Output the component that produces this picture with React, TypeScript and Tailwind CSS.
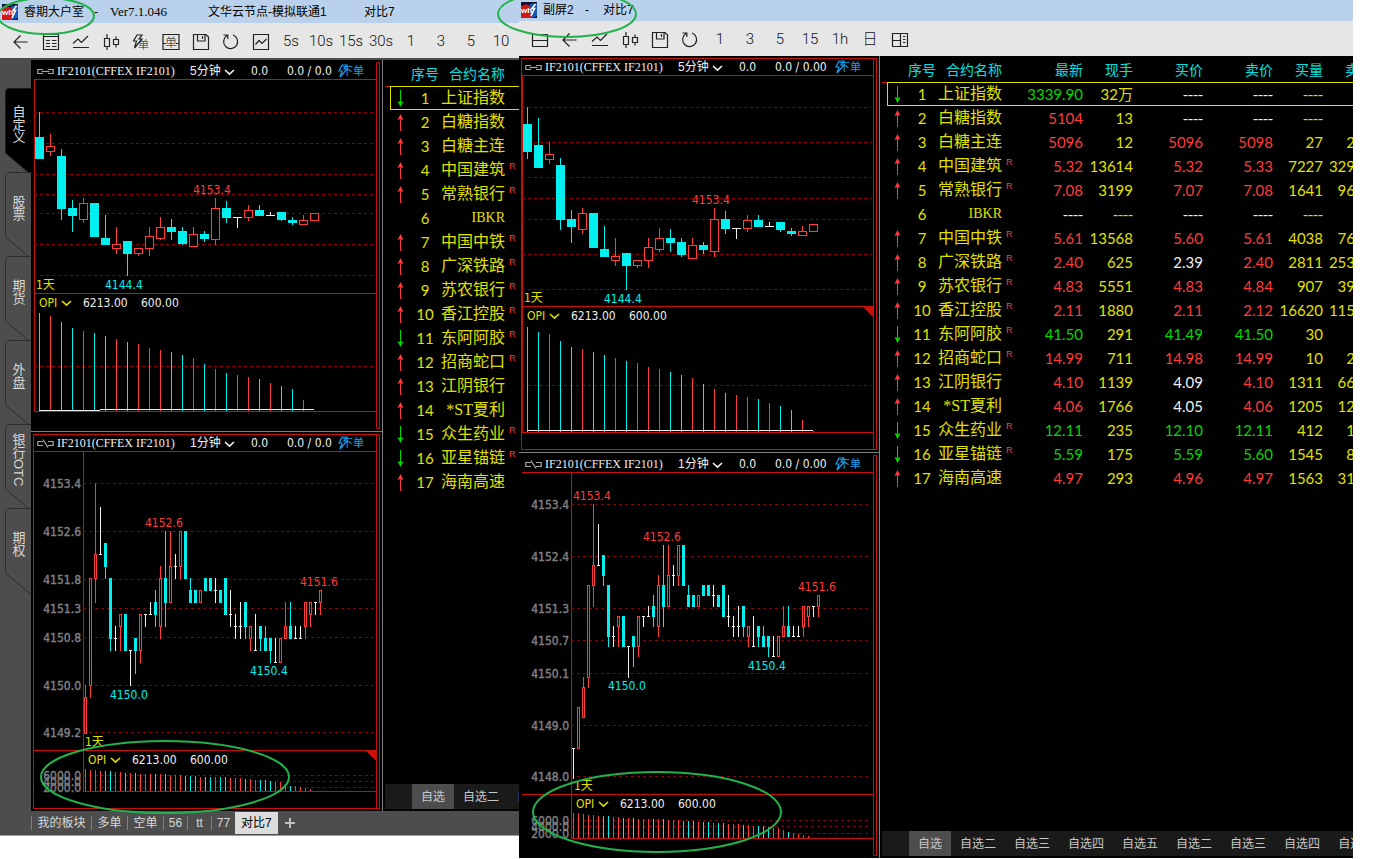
import React from "react";

type Tone = "up" | "down" | "flat";
// [tone, high, bodyTop, bodyBottom, low]
type Candle = [Tone, number, number, number, number];

interface Quote {
  id: number;
  dir: "up" | "down" | null;
  name: string;
  margin?: boolean;
  last: string;
  lastTone: Tone;
  volume: string;
  bid: string;
  bidTone: Tone;
  ask: string;
  askTone: Tone;
  bidVolume: string;
  askVolume: string;
}

interface Label {
  x: number;
  y: number;
  text: string;
  color: string;
}

const RED = "#ff3b3b";
const CYAN = "#00f0f0";
const WHITE = "#f0f0f0";
const YELLOW = "#e0e000";
const TONE_COLOR: Record<Tone, string> = { up: RED, down: CYAN, flat: WHITE };

const q = (
  id: number,
  dir: Quote["dir"],
  name: string,
  margin: boolean,
  last: [string, Tone],
  volume: string,
  bid: [string, Tone],
  ask: [string, Tone],
  bidVolume: string,
  askVolume: string
): Quote => ({
  id,
  dir,
  name,
  margin,
  last: last[0],
  lastTone: last[1],
  volume,
  bid: bid[0],
  bidTone: bid[1],
  ask: ask[0],
  askTone: ask[1],
  bidVolume,
  askVolume,
});

const quotes: Quote[] = [
  q(1, "down", "上证指数", false, ["3339.90", "down"], "32万", ["----", "flat"], ["----", "flat"], "----", ""),
  q(2, "up", "白糖指数", false, ["5104", "up"], "13", ["----", "flat"], ["----", "flat"], "----", ""),
  q(3, "up", "白糖主连", false, ["5096", "up"], "12", ["5096", "up"], ["5098", "up"], "27", "2"),
  q(4, "up", "中国建筑", true, ["5.32", "up"], "13614", ["5.32", "up"], ["5.33", "up"], "7227", "329"),
  q(5, "up", "常熟银行", true, ["7.08", "up"], "3199", ["7.07", "up"], ["7.08", "up"], "1641", "96"),
  q(6, null, "IBKR", false, ["----", "flat"], "----", ["----", "flat"], ["----", "flat"], "----", ""),
  q(7, "up", "中国中铁", true, ["5.61", "up"], "13568", ["5.60", "up"], ["5.61", "up"], "4038", "76"),
  q(8, "up", "广深铁路", true, ["2.40", "up"], "625", ["2.39", "flat"], ["2.40", "up"], "2811", "253"),
  q(9, "up", "苏农银行", true, ["4.83", "up"], "5551", ["4.83", "up"], ["4.84", "up"], "907", "39"),
  q(10, "up", "香江控股", true, ["2.11", "up"], "1880", ["2.11", "up"], ["2.12", "up"], "16620", "115"),
  q(11, "down", "东阿阿胶", true, ["41.50", "down"], "291", ["41.49", "down"], ["41.50", "down"], "30", ""),
  q(12, "up", "招商蛇口", true, ["14.99", "up"], "711", ["14.98", "up"], ["14.99", "up"], "10", "2"),
  q(13, "up", "江阴银行", false, ["4.10", "up"], "1139", ["4.09", "flat"], ["4.10", "up"], "1311", "66"),
  q(14, "up", "*ST夏利", false, ["4.06", "up"], "1766", ["4.05", "flat"], ["4.06", "up"], "1205", "12"),
  q(15, "down", "众生药业", true, ["12.11", "down"], "235", ["12.10", "down"], ["12.11", "down"], "412", "1"),
  q(16, "down", "亚星锚链", true, ["5.59", "down"], "175", ["5.59", "down"], ["5.60", "down"], "1545", "8"),
  q(17, "up", "海南高速", false, ["4.97", "up"], "293", ["4.96", "up"], ["4.97", "up"], "1563", "31"),
];

// 5分钟 K线
const fiveMinMain: Candle[] = [
  ["down", 112, 137, 159, 159],
  ["up", 134, 146, 152, 156],
  ["down", 149, 156, 209, 220],
  ["down", 200, 208, 216, 232],
  ["up", 198, 203, 220, 223],
  ["down", 203, 203, 237, 237],
  ["down", 215, 238, 245, 245],
  ["up", 227, 244, 249, 254],
  ["down", 241, 241, 254, 276],
  ["up", 248, 248, 254, 256],
  ["up", 227, 236, 249, 256],
  ["up", 217, 227, 239, 240],
  ["down", 219, 227, 232, 240],
  ["down", 227, 231, 244, 245],
  ["up", 227, 234, 247, 247],
  ["down", 231, 234, 239, 242],
  ["up", 198, 208, 240, 245],
  ["down", 201, 208, 218, 223],
  ["flat", 217, 217, 218, 228],
  ["up", 205, 210, 218, 221],
  ["down", 205, 210, 216, 216],
  ["flat", 212, 215, 216, 216],
  ["down", 212, 212, 220, 221],
  ["down", 217, 220, 223, 225],
  ["up", 215, 220, 225, 225],
  ["up", 213, 213, 221, 221],
];

const fiveMinSub: Candle[] = [
  ["down", 107, 124, 152, 159],
  ["down", 118, 145, 168, 168],
  ["up", 142, 154, 160, 164],
  ["down", 158, 165, 220, 230],
  ["down", 210, 219, 227, 243],
  ["up", 208, 213, 230, 234],
  ["down", 213, 213, 248, 248],
  ["down", 226, 249, 257, 257],
  ["up", 238, 256, 261, 266],
  ["down", 253, 253, 266, 290],
  ["up", 260, 260, 266, 268],
  ["up", 238, 247, 261, 268],
  ["up", 228, 238, 250, 252],
  ["down", 229, 238, 243, 252],
  ["down", 238, 242, 255, 257],
  ["up", 238, 245, 259, 259],
  ["down", 242, 245, 250, 254],
  ["up", 208, 219, 252, 257],
  ["down", 211, 219, 229, 234],
  ["flat", 228, 228, 229, 239],
  ["up", 215, 220, 229, 232],
  ["down", 215, 220, 227, 227],
  ["flat", 222, 226, 227, 227],
  ["down", 222, 222, 230, 232],
  ["down", 228, 231, 234, 236],
  ["up", 226, 231, 236, 236],
  ["up", 224, 224, 232, 232],
];

// 1分钟 K线，单位为距 4153.4 的跳数 (0.2)
const oneMin: Candle[] = [
  ["flat", 24, 24, 24, 27],
  ["up", 20, 20, 24, 24],
  ["up", 17, 18, 21, 21],
  ["up", 8, 8, 17, 18],
  ["up", 0, 6, 8, 10],
  ["flat", 2, 6, 6, 6],
  ["down", 5, 5, 7, 8],
  ["down", 8, 8, 13, 14],
  ["flat", 12, 13, 13, 14],
  ["up", 11, 11, 12, 14],
  ["down", 11, 11, 14, 14],
  ["flat", 14, 14, 14, 17],
  ["down", 13, 13, 14, 16],
  ["up", 11, 11, 14, 15],
  ["flat", 11, 11, 11, 12],
  ["flat", 10, 11, 11, 11],
  ["down", 9, 10, 11, 12],
  ["up", 7, 8, 12, 13],
  ["down", 4, 8, 10, 12],
  ["up", 4, 7, 10, 10],
  ["flat", 6, 7, 7, 8],
  ["up", 4, 4, 7, 8],
  ["down", 4, 4, 8, 8],
  ["down", 8, 9, 10, 10],
  ["down", 9, 9, 10, 10],
  ["up", 9, 9, 10, 10],
  ["down", 8, 8, 9, 9],
  ["down", 8, 8, 9, 9],
  ["flat", 8, 9, 9, 10],
  ["down", 9, 9, 10, 10],
  ["down", 8, 8, 11, 11],
  ["flat", 9, 11, 11, 12],
  ["flat", 11, 12, 12, 13],
  ["flat", 10, 12, 12, 13],
  ["down", 10, 10, 12, 13],
  ["up", 12, 12, 13, 14],
  ["flat", 11, 14, 14, 14],
  ["down", 12, 12, 13, 14],
  ["down", 12, 13, 14, 14],
  ["down", 13, 13, 14, 15],
  ["flat", 13, 15, 15, 15],
  ["up", 13, 13, 15, 15],
  ["up", 10, 12, 13, 13],
  ["down", 10, 12, 13, 13],
  ["flat", 12, 13, 13, 13],
  ["flat", 12, 13, 13, 13],
  ["up", 10, 10, 12, 13],
  ["up", 10, 10, 11, 12],
  ["flat", 10, 10, 10, 11],
  ["up", 9, 9, 10, 11],
];

const oneMinOpi = [
  25, 25, 24, 23, 23, 22, 22, 22, 21, 21, 20, 20, 20, 19, 19, 19, 19, 19, 19,
  18, 18, 18, 17, 17, 17, 16, 16, 16, 15, 15, 15, 14, 14, 14, 13, 13, 12, 12,
  12, 11, 10, 10, 8, 6, 5, 4, 3, 2, 0, 0,
];

const scaleTicks = (data: Candle[], top: number, step: number): Candle[] =>
  data.map(([tone, h, a, b, l]) => {
    const y = (t: number) => Math.round(top + t * step);
    return [tone, y(h), y(a), y(b) + 1, y(l) + 1];
  });

const Candles = ({
  data,
  x,
  step,
  half,
}: {
  data: Candle[];
  x: number;
  step: number;
  half: number;
}) => (
  <>
    {data.map(([tone, high, top, bottom, low], i) => {
      const cx = x + i * step;
      const color = TONE_COLOR[tone];
      const w = half * 2 + 1;
      if (tone === "flat") {
        return (
          <g key={i} fill={color}>
            <rect x={cx} y={high} width={1} height={Math.max(low - high, 1)} />
            <rect x={cx - half} y={top} width={w} height={1} />
          </g>
        );
      }
      return (
        <g key={i}>
          <rect x={cx} y={high} width={1} height={low - high} fill={color} />
          {tone === "down" ? (
            <rect x={cx - half} y={top} width={w} height={bottom - top} fill={color} />
          ) : (
            <rect
              x={cx - half + 0.5}
              y={top + 0.5}
              width={w - 1}
              height={bottom - top - 1}
              fill="#000"
              stroke={color}
            />
          )}
        </g>
      );
    })}
  </>
);

interface PlotProps {
  x: number;
  y: number;
  width: number;
  height: number;
  axisX: number;
  grid: number[];
  axisLabels?: string[];
  labels?: Label[];
  children?: React.ReactNode;
}

const Plot = ({
  x,
  y,
  width,
  height,
  axisX,
  grid,
  axisLabels,
  labels = [],
  children,
}: PlotProps) => (
  <svg
    width={width}
    height={height}
    viewBox={`${x} ${y} ${width} ${height}`}
    shapeRendering="crispEdges"
    className="block overflow-visible font-['DejaVu_Sans_Condensed','DejaVu_Sans','Noto_Sans_CJK_SC',sans-serif] text-[12px]"
  >
    <rect x={axisX} y={y} width={1} height={height} fill="#c81008" />
    {grid.map((gy, i) => (
      <g key={gy}>
        <line
          x1={axisX}
          x2={x + width - 2}
          y1={gy + 0.5}
          y2={gy + 0.5}
          stroke="#900000"
          strokeDasharray="3 3"
        />
        {axisLabels && (
          <text
            x={axisX - 2}
            y={gy + 5}
            textAnchor="end"
            fill="#808080"
            stroke="#808080"
            strokeWidth={0.4}
          >
            {axisLabels[i]}
          </text>
        )}
      </g>
    ))}
    {children}
    {labels.map((l) => (
      <text key={l.text} x={l.x} y={l.y} fill={l.color}>
        {l.text}
      </text>
    ))}
  </svg>
);

const Chevron = ({ color }: { color: string }) => (
  <svg
    width="11"
    height="7"
    viewBox="0 0 11 7"
    fill="none"
    stroke={color}
    strokeWidth="1.6"
    className="mt-0.5"
  >
    <path d="M1 1 L5.5 5.2 L10 1" />
  </svg>
);

const ChainIcon = ({ broken }: { broken?: boolean }) => (
  <svg width="17" height="9" viewBox="0 0 17 9" fill="none" stroke="#a8a8a8" strokeWidth="1.2">
    <path d="M6 2.5 H0.8 V6.5 H6" />
    <path d="M11 2.5 H16.2 V6.5 H11" />
    {broken ? <path d="M6 0.5 L11 8.5" /> : <path d="M4.5 4.5 H12.5" />}
  </svg>
);

interface PaneProps {
  period: string;
  tail: string;
  wide?: boolean;
  broken?: boolean;
  framed?: boolean;
  corner?: boolean;
  indented?: boolean;
  chart: React.ReactNode;
  indicator: React.ReactNode;
}

const Pane = ({
  period,
  tail,
  wide,
  broken,
  framed,
  corner,
  indented,
  chart,
  indicator,
}: PaneProps) => (
  <section className="flex px-0.5 py-0.5">
    <div
      className={`border border-r-[#c81008] ${
        framed ? "border-y-[#c81008] border-l-[#c81008]" : "border-y-black border-l-black"
      }`}
    >
      <header className="flex h-[17px] items-center border-b border-[#c81008] pl-[3px] text-[12px] leading-none whitespace-nowrap text-[#f0f0f0]">
        <ChainIcon broken={broken} />
        <span className="ml-[3px] w-[133px] font-['Liberation_Serif',serif]">
          IF2101(CFFEX IF2101)
        </span>
        <button className="flex w-[61px] items-center gap-[3px]">
          {period}
          <Chevron color="#f0f0f0" />
        </button>
        <span className="w-9 font-['DejaVu_Sans_Condensed','DejaVu_Sans',sans-serif]">0.0</span>
        <span
          className={`font-['DejaVu_Sans_Condensed','DejaVu_Sans',sans-serif] ${
            wide ? "w-[60px]" : "w-[51px]"
          }`}
        >
          {tail}
        </span>
        <button className="flex items-center text-[11px] text-[#18a0f0]">
          <svg width="10" height="14" viewBox="0 0 10 14" fill="none" stroke="currentColor" strokeWidth="1.2">
            <path d="M4 1 H9 L6 5 H9 L2 13 L4 7 H1 Z" />
          </svg>
          <span className="-ml-1.5">下单</span>
        </button>
      </header>
      <div className="border-b border-[#c81008]">{chart}</div>
      <div
        className={`relative flex h-[17px] items-center border-l border-[#c81008] pl-1 font-['DejaVu_Sans_Condensed','DejaVu_Sans',sans-serif] text-[12px] leading-none text-[#f0f0f0] ${
          indented ? "ml-[49px]" : ""
        }`}
      >
        <button className="flex w-11 items-center text-[#e0e000]">
          <span className="w-[22px] text-left">OPI</span>
          <Chevron color={YELLOW} />
        </button>
        <span className="w-[58px]">6213.00</span>
        <span>600.00</span>
        {corner && (
          <svg width="10" height="10" className="absolute top-0 right-0" fill="#c81008">
            <path d="M0 0 H10 V10 Z" />
          </svg>
        )}
      </div>
      <div className={indented ? "" : "border-b border-[#c81008]"}>{indicator}</div>
      {indented && <div className="ml-[49px] h-px bg-[#c81008]" />}
      <div className="h-4" />
    </div>
    <div className="w-[3px] border-y border-r border-[#c81008]" />
  </section>
);

const OpiBars = ({
  x,
  step,
  base,
  tops,
  tones,
}: {
  x: number;
  step: number;
  base: number;
  tops: number[];
  tones: Tone[];
}) => (
  <>
    {tops.map((top, i) => (
      <rect
        key={i}
        x={x + i * step}
        y={top}
        width={1}
        height={Math.max(base - top, 0)}
        fill={tones[i] === "down" ? CYAN : RED}
      />
    ))}
  </>
);

const tonesOf = (pattern: string): Tone[] =>
  pattern.split("").map((c) => (c === "c" ? "down" : "up"));

const mainOpiTops = [
  313, 316, 322, 328, 331, 333, 336, 339, 342, 344, 348, 350, 352, 355, 358,
  364, 369, 373, 375, 377, 379, 383, 386, 389, 400,
];
const subOpiTops = [
  327, 332, 334, 341, 347, 349, 352, 355, 358, 361, 363, 367, 369, 372, 375,
  378, 384, 389, 393, 395, 397, 399, 403, 406, 410, 420, 431,
];

const Arrow = ({ dir }: { dir: "up" | "down" }) => (
  <svg
    width="7"
    height="17"
    viewBox="0 0 7 17"
    className={`mx-auto ${dir === "down" ? "rotate-180" : ""}`}
    fill={dir === "up" ? RED : "#00d800"}
  >
    <rect x="3" y="2" width="1" height="15" />
    <path d="M3.5 0 L6.5 6 L3.5 5 L0.5 6 Z" />
  </svg>
);

const TEXT_TONE: Record<Tone, string> = {
  up: "text-[#ff3b3b]",
  down: "text-[#00d800]",
  flat: "text-[#f0f0f0]",
};

const Num = ({ value, className }: { value: string; className: string }) => (
  <td
    className={`p-0 text-right ${className} ${
      value === "----" ? "font-['Liberation_Serif',serif]" : ""
    }`}
  >
    {value}
  </td>
);

const QuoteTable = ({ compact }: { compact?: boolean }) => (
  <table
    className={`ml-0.5 table-fixed border-collapse text-[15px] leading-none whitespace-nowrap text-[#e0e000] ${
      compact ? "w-[140px]" : "w-[473px]"
    }`}
  >
    <colgroup>
      <col className="w-[5px]" />
      <col className="w-5" />
      <col className="w-[30px]" />
      <col className="w-[65px]" />
      <col />
      {!compact && (
        <>
          <col className="w-[67px]" />
          <col className="w-[50px]" />
          <col className="w-[70px]" />
          <col className="w-[70px]" />
          <col className="w-[50px]" />
          <col className="w-8" />
        </>
      )}
    </colgroup>
    <thead>
      <tr className="h-[26px] border-b border-[#c81008] text-[14px] text-[#00e0e0] [&>th]:p-0 [&>th]:pt-0.5 [&>th]:font-normal">
        <th />
        <th />
        <th>序号</th>
        <th className="text-right">合约名称</th>
        <th />
        {!compact && (
          <>
            <th className="text-right">最新</th>
            <th className="text-right">现手</th>
            <th className="text-right">买价</th>
            <th className="text-right">卖价</th>
            <th className="text-right">买量</th>
            <th className="text-left">
              <span className="ml-[22px]">卖量</span>
            </th>
          </>
        )}
      </tr>
    </thead>
    <tbody className="font-['Lato','Noto_Sans_CJK_SC',sans-serif]">
      {quotes.map((item) => (
        <tr key={item.id} className="relative h-6">
          <td className="p-0" />
          <td className="p-0">
            {item.dir && <Arrow dir={item.dir} />}
            {item.id === 1 && (
              <div className="absolute inset-y-0 right-0 left-[5px] border border-[#e0e000]" />
            )}
          </td>
          <td className="p-0 text-center">{item.id}</td>
          <td
            className={`p-0 text-right font-['Liberation_Serif','Noto_Sans_CJK_SC',serif] ${
              item.dir ? "text-[16px]" : "text-[14px]"
            }`}
          >
            {item.name}
          </td>
          <td className="p-0 pl-1 align-top font-['Liberation_Sans',sans-serif] text-[9px] text-[#ff3b3b]">
            {item.margin && <span className="relative top-1">R</span>}
          </td>
          {!compact && (
            <>
              <Num value={item.last} className={TEXT_TONE[item.lastTone]} />
              <Num value={item.volume} className="" />
              <Num value={item.bid} className={TEXT_TONE[item.bidTone]} />
              <Num value={item.ask} className={TEXT_TONE[item.askTone]} />
              <Num value={item.bidVolume} className="" />
              <Num value={item.askVolume} className="" />
            </>
          )}
        </tr>
      ))}
    </tbody>
  </table>
);

const GroupTabs = ({ names }: { names: string[] }) => (
  <nav className="ml-0.5 flex h-[25px] overflow-hidden bg-[#1a1a1a] pl-[27px] text-[12px] whitespace-nowrap text-[#c8c8c8]">
    {names.map((name, i) => (
      <button key={i} className={`shrink-0 px-[9px] ${i === 0 ? "bg-[#4d4d4d]" : ""}`}>
        {name}
      </button>
    ))}
  </nav>
);

const Logo = () => (
  <svg width="16" height="16" viewBox="0 0 16 16">
    <rect width="16" height="16" fill="#101030" />
    <path d="M0 4 Q5 1 10 4 V16 H0 Z" fill="#d01818" />
    <path d="M9 2 L16 1 V14 L10 16 Z" fill="#1858b8" />
    <path d="M14.5 2 L11 6.5 H13.5 L10 14" fill="none" stroke="#fff" strokeWidth="1.6" />
    <text x="0" y="11" fontSize="8" fontWeight="700" fill="#fff" fontFamily="Liberation Sans">
      wh
    </text>
  </svg>
);

const ICONS: Record<string, React.ReactNode> = {
  back: <path d="M15.5 9 H2 M8.5 2.5 L2 9 L8.5 15.5" />,
  list: (
    <path d="M1.5 1.5 H16.5 V16.5 H1.5 Z M1.5 3.5 H16.5 M4 7.5 H8 M4 10.5 H8 M4 13.5 H8 M10 7.5 H14.5 M10 10.5 H14.5 M10 13.5 H14.5" />
  ),
  board: <path d="M1.5 3.5 H16.5 V15.5 H1.5 Z M1.5 9.5 H16.5" />,
  trend: <path d="M1 10.5 L6 6 L9.5 9.5 L16 3 M1 14.5 H17" />,
  candle: (
    <path d="M2.5 5.5 H7.5 V13.5 H2.5 Z M5 1 V5.5 M5 13.5 V17 M11.5 6.5 H16.5 V11.5 H11.5 Z M14 3.5 V6.5 M14 11.5 V14.5" />
  ),
  flash: (
    <>
      <path d="M5 2 H10 L7 6 H10 L2.5 15 L4.5 8 H1.5 Z" />
      <text x="6" y="16" fontSize="11" fill="#111" stroke="none">
        单
      </text>
    </>
  ),
  order: (
    <>
      <path d="M1 1.5 H17 V16.5 H1 Z M1 10.5 H4 M14 10.5 H17" />
      <text x="3" y="14" fontSize="12" fill="#111" stroke="none">
        单
      </text>
    </>
  ),
  save: <path d="M1.5 1.5 H14 L16.5 4 V16.5 H1.5 Z M5.5 1.5 V8 H13 V1.5 M10.5 3 V6" />,
  refresh: <path d="M11 2 A7 7 0 1 1 5 2.6 M5.8 6 V2 H1.5" />,
  picture: <path d="M1.5 1.5 H16.5 V16.5 H1.5 Z M3.5 11.5 L7 7.5 L10 10.5 L14.5 6" />,
  layout: (
    <path d="M1.5 2.5 H16.5 V15.5 H1.5 Z M9.5 2.5 V15.5 M1.5 9.5 H9.5 M12 5.5 H14.5 M12 8.5 H14.5 M12 11.5 H14.5" />
  ),
};

const Toolbar = ({ items }: { items: string[] }) => (
  <div className="flex h-[35px] items-center overflow-hidden bg-[#e6e6e6] pt-0.5 pl-1.5 text-[15px] text-[#111]">
    {items.map((item) => (
      <button
        key={item}
        aria-label={item}
        className="flex h-full w-[30px] shrink-0 items-center justify-center font-['Roboto','Noto_Sans_CJK_SC',sans-serif] font-light"
      >
        {ICONS[item] ? (
          <svg width="18" height="18" viewBox="0 0 18 18" fill="none" stroke="#222" strokeWidth="1.2">
            {ICONS[item]}
          </svg>
        ) : (
          item
        )}
      </button>
    ))}
  </div>
);

const SIDE_TABS = ["自定义", "股票", "期货", "外盘", "银行OTC", "期权"];
const PAGE_TABS = [
  { name: "我的板块", width: "w-[60px]" },
  { name: "多单", width: "w-9" },
  { name: "空单", width: "w-9" },
  { name: "56", width: "w-6" },
  { name: "tt", width: "w-6" },
  { name: "77", width: "w-6" },
];

const SideTab = ({ name, active }: { name: string; active: boolean }) => (
  <button className="relative flex h-[84px] w-[26px] items-center justify-center pb-3 text-[13px] leading-none text-[#d8d8d8]">
    <svg
      width="26"
      height="87"
      className="absolute top-0 left-0"
      fill={active ? "#000" : "#4d4d4d"}
      stroke={active ? "#1c1c1c" : "#2c2c2c"}
    >
      <path d="M27 0.5 H4 Q0.5 0.5 0.5 4 V65 L26 86.5" />
    </svg>
    <span className="relative [writing-mode:vertical-rl]">{name}</span>
  </button>
);

const MainWindow = () => {
  const minute = scaleTicks(oneMin.slice(2), 483, 11.9);

  return (
    <main className="w-[519px] shrink-0">
      <div className="flex h-[23px] items-center bg-[#b9d1ea] pl-0.5 text-[12px] whitespace-nowrap text-black">
        <Logo />
        <span className="ml-1.5 w-[70px]">睿期大户室</span>
        <span className="w-4">-</span>
        <span className="w-[98px] font-['Liberation_Serif',serif] text-[13px]">Ver7.1.046</span>
        <span className="w-[156px]">文华云节点-模拟联通1</span>
        <span>对比7</span>
      </div>
      <Toolbar
        items={[
          "back", "list", "trend", "candle", "flash", "order", "save", "refresh", "picture",
          "5s", "10s", "15s", "30s", "1", "3", "5", "10",
        ]}
      />
      <div className="flex bg-[#4d4d4d] pt-0.5">
        <nav className="w-[31px] shrink-0 pt-7 pl-[5px]">
          {SIDE_TABS.map((name, i) => (
            <SideTab key={name} name={name} active={i === 0} />
          ))}
        </nav>
        <div className="shrink-0 border-r border-[#808080] bg-black">
          <Pane
            period="5分钟"
            tail="0.0 / 0.0"
            chart={
              <Plot
                x={34}
                y={80}
                width={342}
                height={213}
                axisX={34}
                grid={[112, 143, 174, 194, 213, 244, 275]}
                labels={[
                  { x: 193, y: 194, text: "4153.4", color: RED },
                  { x: 105, y: 289, text: "4144.4", color: CYAN },
                  { x: 36, y: 289, text: "1天", color: YELLOW },
                ]}
              >
                <Candles data={fiveMinMain} x={39} step={11} half={4} />
              </Plot>
            }
            indicator={
              <Plot x={34} y={311} width={342} height={100} axisX={34} grid={[366]}>
                <OpiBars
                  x={39}
                  step={11}
                  base={411}
                  tops={mainOpiTops}
                  tones={tonesOf("crccrccrcrrrccrcrcrrcrccr")}
                />
                <path d="M39 410.5 H100 M100 409.5 H314" stroke={WHITE} />
              </Plot>
            }
          />
          <div className="h-px bg-[#808080]" />
          <Pane
            period="1分钟"
            tail="0.0 / 0.0"
            broken
            framed
            corner
            indented
            chart={
              <Plot
                x={34}
                y={452}
                width={342}
                height={298}
                axisX={83}
                grid={[483, 531, 579, 608, 637, 685, 732]}
                axisLabels={["4153.4", "4152.6", "4151.8", "4151.3", "4150.8", "4150.0", "4149.2"]}
                labels={[
                  { x: 145, y: 527, text: "4152.6", color: RED },
                  { x: 300, y: 586, text: "4151.6", color: RED },
                  { x: 110, y: 699, text: "4150.0", color: CYAN },
                  { x: 250, y: 675, text: "4150.4", color: CYAN },
                  { x: 85, y: 746, text: "1天", color: YELLOW },
                ]}
              >
                <Candles data={minute} x={85} step={5} half={1} />
              </Plot>
            }
            indicator={
              <Plot
                x={34}
                y={768}
                width={342}
                height={23}
                axisX={83}
                grid={[775, 781, 787]}
                axisLabels={["6000.0", "4000.0", "2000.0"]}
              >
                <OpiBars
                  x={85}
                  step={5}
                  base={791}
                  tops={oneMinOpi.slice(2).map((h) => 791 - Math.round(h * 0.9))}
                  tones={minute.map((c) => c[0])}
                />
              </Plot>
            }
          />
        </div>
        <div className="flex min-w-0 flex-1 flex-col justify-between overflow-hidden bg-black pb-0.5">
          <QuoteTable compact />
          <GroupTabs names={["自选", "自选二", "自选三"]} />
        </div>
      </div>
      <nav className="flex h-[25px] items-center border-b border-[#a0a0a0] bg-[#4d4d4d] pl-[31px] text-[12px] whitespace-nowrap text-[#d8d8d8]">
        {PAGE_TABS.map((tab) => (
          <button
            key={tab.name}
            className={`border-l border-[#808080] text-center leading-[14px] ${tab.width}`}
          >
            {tab.name}
          </button>
        ))}
        <button className="h-[22px] bg-[#dcdcdc] px-1.5 text-black">对比7</button>
        <button aria-label="add" className="ml-1.5">
          <svg width="12" height="12" stroke="#c0c0c0" strokeWidth="2">
            <path d="M6 1 V11 M1 6 H11" />
          </svg>
        </button>
      </nav>
    </main>
  );
};

const SubWindow = () => {
  const minute = scaleTicks(oneMin, 504, 10.15);

  return (
    <aside className="min-w-0 flex-1">
      <div className="flex h-[21px] items-center bg-[#b9d1ea] pb-0.5 pl-0.5 text-[12px] whitespace-nowrap text-black">
        <Logo />
        <span className="ml-1.5 w-[42px]">副屏2</span>
        <span className="w-[18px]">-</span>
        <span>对比7</span>
      </div>
      <Toolbar
        items={[
          "board", "back", "trend", "candle", "save", "refresh",
          "1", "3", "5", "15", "1h", "日", "layout",
        ]}
      />
      <div className="flex bg-black">
        <div className="shrink-0 border-r border-[#808080]">
          <Pane
            period="5分钟"
            tail="0.0 / 0.00"
            wide
            framed
            corner
            chart={
              <Plot
                x={522}
                y={76}
                width={351}
                height={230}
                axisX={522}
                grid={[107, 142, 177, 198, 219, 254, 289]}
                labels={[
                  { x: 692, y: 204, text: "4153.4", color: RED },
                  { x: 604, y: 303, text: "4144.4", color: CYAN },
                  { x: 524, y: 302, text: "1天", color: YELLOW },
                ]}
              >
                <Candles data={fiveMinSub} x={527} step={11} half={4} />
              </Plot>
            }
            indicator={
              <Plot x={522} y={324} width={351} height={108} axisX={522} grid={[385]}>
                <OpiBars
                  x={527}
                  step={11}
                  base={432}
                  tops={subOpiTops}
                  tones={tonesOf("ccrccrccrcrrrccrcrcrrcrccrr")}
                />
                <path d="M527 430.5 H813" stroke={WHITE} />
              </Plot>
            }
          />
          <div className="h-px bg-[#808080]" />
          <Pane
            period="1分钟"
            tail="0.0 / 0.00"
            wide
            broken
            indented
            chart={
              <Plot
                x={522}
                y={473}
                width={351}
                height={321}
                axisX={571}
                grid={[504, 556, 608, 640, 673, 725, 776]}
                axisLabels={["4153.4", "4152.4", "4151.3", "4150.7", "4150.1", "4149.0", "4148.0"]}
                labels={[
                  { x: 573, y: 500, text: "4153.4", color: RED },
                  { x: 643, y: 541, text: "4152.6", color: RED },
                  { x: 798, y: 591, text: "4151.6", color: RED },
                  { x: 608, y: 690, text: "4150.0", color: CYAN },
                  { x: 748, y: 670, text: "4150.4", color: CYAN },
                  { x: 574, y: 790, text: "1天", color: YELLOW },
                ]}
              >
                <Candles data={minute} x={573} step={5} half={1} />
              </Plot>
            }
            indicator={
              <Plot
                x={522}
                y={812}
                width={351}
                height={26}
                axisX={571}
                grid={[820, 826, 833]}
                axisLabels={["6000.0", "4000.0", "2000.0"]}
              >
                <OpiBars
                  x={573}
                  step={5}
                  base={838}
                  tops={oneMinOpi.map((h) => 838 - h)}
                  tones={minute.map((c) => c[0])}
                />
              </Plot>
            }
          />
        </div>
        <div className="flex min-w-0 flex-1 flex-col justify-between overflow-hidden pb-0.5">
          <QuoteTable />
          <GroupTabs
            names={["自选", "自选二", "自选三", "自选四", "自选五", "自选二", "自选三", "自选四", "自选五"]}
          />
        </div>
      </div>
    </aside>
  );
};

export default function App() {
  return (
    <div className="relative flex min-h-screen items-start overflow-hidden bg-white pr-9 font-['Liberation_Sans','Noto_Sans_CJK_SC',sans-serif]">
      <MainWindow />
      <SubWindow />
      {/* 标注圈 */}
      <svg
        className="pointer-events-none absolute inset-0 h-full w-full"
        fill="none"
        stroke="#22b14c"
        strokeWidth="2"
      >
        <ellipse cx="46" cy="16" rx="48" ry="18" />
        <ellipse cx="567" cy="14" rx="69" ry="23" />
        <ellipse cx="165" cy="777" rx="124" ry="36" />
        <ellipse cx="657" cy="812" rx="124" ry="40" />
      </svg>
    </div>
  );
}
